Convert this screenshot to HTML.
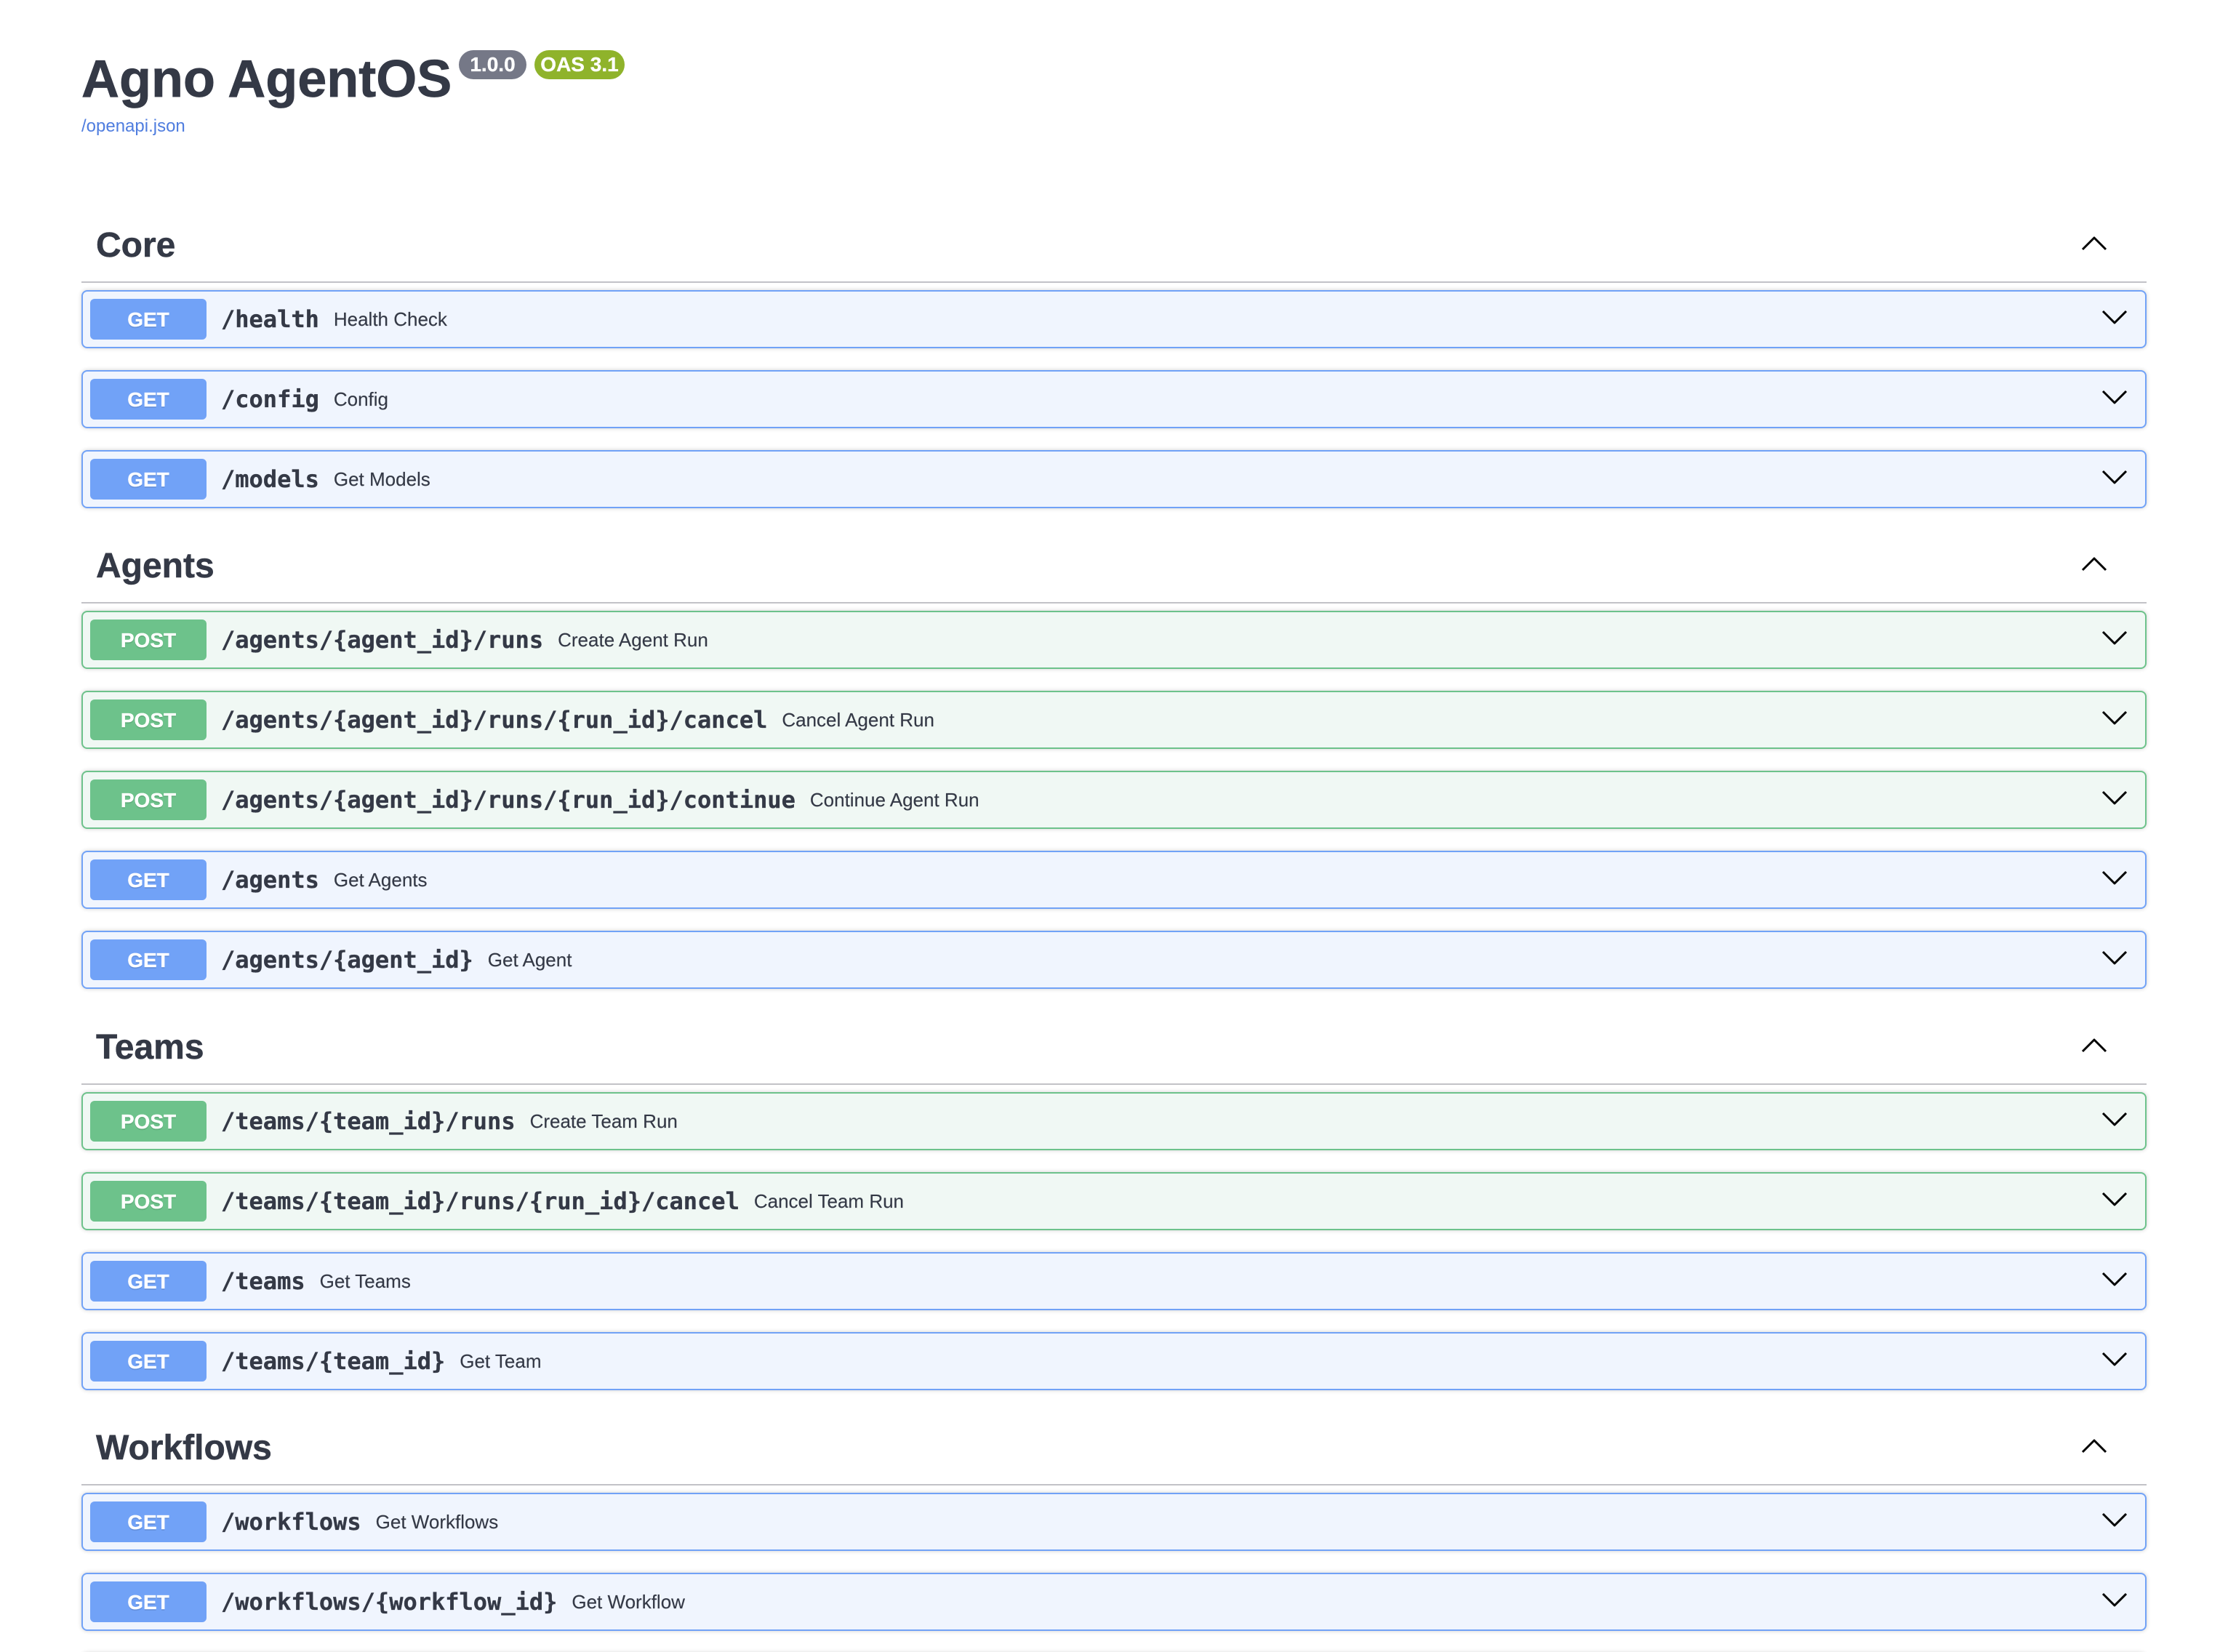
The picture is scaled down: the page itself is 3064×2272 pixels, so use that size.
<!DOCTYPE html>
<html><head><meta charset="utf-8"><title>Agno AgentOS</title>
<style>
html,body{margin:0;padding:0;background:#fff}
body{width:3064px;height:2272px}
#w{width:3064px;height:2272px;position:relative;overflow:hidden;font-family:"Liberation Sans",sans-serif;color:#343946;background:#fff}
h1{margin:0;position:absolute;left:112px;top:68px;font-size:72px;line-height:82px;font-weight:700;color:#343946;white-space:nowrap;-webkit-text-stroke:.7px #343946}
.b{position:absolute;top:69px;height:40px;border-radius:20px;color:#fff;font-weight:700;font-size:28px;line-height:39px;text-align:center;-webkit-text-stroke:.3px #fff}
a{position:absolute;left:112px;top:160px;font-size:24px;line-height:28px;color:#4f7ddf;text-decoration:none}
h3{margin:0;position:absolute;left:132px;font-size:48px;line-height:56px;font-weight:700;color:#343946;-webkit-text-stroke:.5px #343946}
.l{position:absolute;left:112px;width:2840px;height:2px;background:#c2c2c7}
.r{position:absolute;left:112px;width:2840px;height:80px;box-sizing:border-box;border:2px solid;border-radius:8px;box-shadow:0 0 6px rgba(0,0,0,.19);display:flex;align-items:center;padding-left:10px}
.g{background:#f0f5fe;border-color:#71a2f7}
.p{background:#f0f8f4;border-color:#6dc28b}
.m{width:160px;height:56px;border-radius:6px;color:#fff;font-weight:700;font-size:28px;line-height:58px;text-align:center;text-shadow:0 2px 0 rgba(0,0,0,.1);flex:none;-webkit-text-stroke:.3px #fff}
.g .m{background:#71a2f7}
.p .m{background:#6dc28b}
.t{font-family:"DejaVu Sans Mono",monospace;font-weight:700;font-size:32px;padding:0 20px;color:#343946;white-space:nowrap;-webkit-text-stroke:.3px #343946}
.d{font-size:26px;color:#343946;white-space:nowrap;-webkit-text-stroke:.15px #343946}
svg{position:absolute;overflow:visible}
.r svg{left:2777px;top:26px}
path{fill:none;stroke:#000;stroke-width:3;stroke-linejoin:round}
</style></head><body><div id="w">
<h1>Agno AgentOS</h1>
<div class="b" style="left:631px;width:93px;background:#757887">1.0.0</div>
<div class="b" style="left:735px;width:124px;background:#8fb32b">OAS 3.1</div>
<a href="#">/openapi.json</a>

<h3 style="top:310px">Core</h3>
<svg style="left:2863px;top:326px" width="34" height="18"><path d="M1 17L17 1L33 17"/></svg>
<div class="l" style="top:387px"></div>
<div class="r g" style="top:399px"><span class="m">GET</span><span class="t">/health</span><span class="d">Health Check</span><svg width="34" height="18"><path d="M1 1L17 17L33 1"/></svg></div>
<div class="r g" style="top:509px"><span class="m">GET</span><span class="t">/config</span><span class="d">Config</span><svg width="34" height="18"><path d="M1 1L17 17L33 1"/></svg></div>
<div class="r g" style="top:619px"><span class="m">GET</span><span class="t">/models</span><span class="d">Get Models</span><svg width="34" height="18"><path d="M1 1L17 17L33 1"/></svg></div>

<h3 style="top:751px">Agents</h3>
<svg style="left:2863px;top:767px" width="34" height="18"><path d="M1 17L17 1L33 17"/></svg>
<div class="l" style="top:828px"></div>
<div class="r p" style="top:840px"><span class="m">POST</span><span class="t">/agents/{agent_id}/runs</span><span class="d">Create Agent Run</span><svg width="34" height="18"><path d="M1 1L17 17L33 1"/></svg></div>
<div class="r p" style="top:950px"><span class="m">POST</span><span class="t">/agents/{agent_id}/runs/{run_id}/cancel</span><span class="d">Cancel Agent Run</span><svg width="34" height="18"><path d="M1 1L17 17L33 1"/></svg></div>
<div class="r p" style="top:1060px"><span class="m">POST</span><span class="t">/agents/{agent_id}/runs/{run_id}/continue</span><span class="d">Continue Agent Run</span><svg width="34" height="18"><path d="M1 1L17 17L33 1"/></svg></div>
<div class="r g" style="top:1170px"><span class="m">GET</span><span class="t">/agents</span><span class="d">Get Agents</span><svg width="34" height="18"><path d="M1 1L17 17L33 1"/></svg></div>
<div class="r g" style="top:1280px"><span class="m">GET</span><span class="t">/agents/{agent_id}</span><span class="d">Get Agent</span><svg width="34" height="18"><path d="M1 1L17 17L33 1"/></svg></div>

<h3 style="top:1413px">Teams</h3>
<svg style="left:2863px;top:1429px" width="34" height="18"><path d="M1 17L17 1L33 17"/></svg>
<div class="l" style="top:1490px"></div>
<div class="r p" style="top:1502px"><span class="m">POST</span><span class="t">/teams/{team_id}/runs</span><span class="d">Create Team Run</span><svg width="34" height="18"><path d="M1 1L17 17L33 1"/></svg></div>
<div class="r p" style="top:1612px"><span class="m">POST</span><span class="t">/teams/{team_id}/runs/{run_id}/cancel</span><span class="d">Cancel Team Run</span><svg width="34" height="18"><path d="M1 1L17 17L33 1"/></svg></div>
<div class="r g" style="top:1722px"><span class="m">GET</span><span class="t">/teams</span><span class="d">Get Teams</span><svg width="34" height="18"><path d="M1 1L17 17L33 1"/></svg></div>
<div class="r g" style="top:1832px"><span class="m">GET</span><span class="t">/teams/{team_id}</span><span class="d">Get Team</span><svg width="34" height="18"><path d="M1 1L17 17L33 1"/></svg></div>

<h3 style="top:1964px">Workflows</h3>
<svg style="left:2863px;top:1980px" width="34" height="18"><path d="M1 17L17 1L33 17"/></svg>
<div class="l" style="top:2041px"></div>
<div class="r g" style="top:2053px"><span class="m">GET</span><span class="t">/workflows</span><span class="d">Get Workflows</span><svg width="34" height="18"><path d="M1 1L17 17L33 1"/></svg></div>
<div class="r g" style="top:2163px"><span class="m">GET</span><span class="t">/workflows/{workflow_id}</span><span class="d">Get Workflow</span><svg width="34" height="18"><path d="M1 1L17 17L33 1"/></svg></div>
<div class="r g" style="top:2273px"></div>
</div></body></html>
